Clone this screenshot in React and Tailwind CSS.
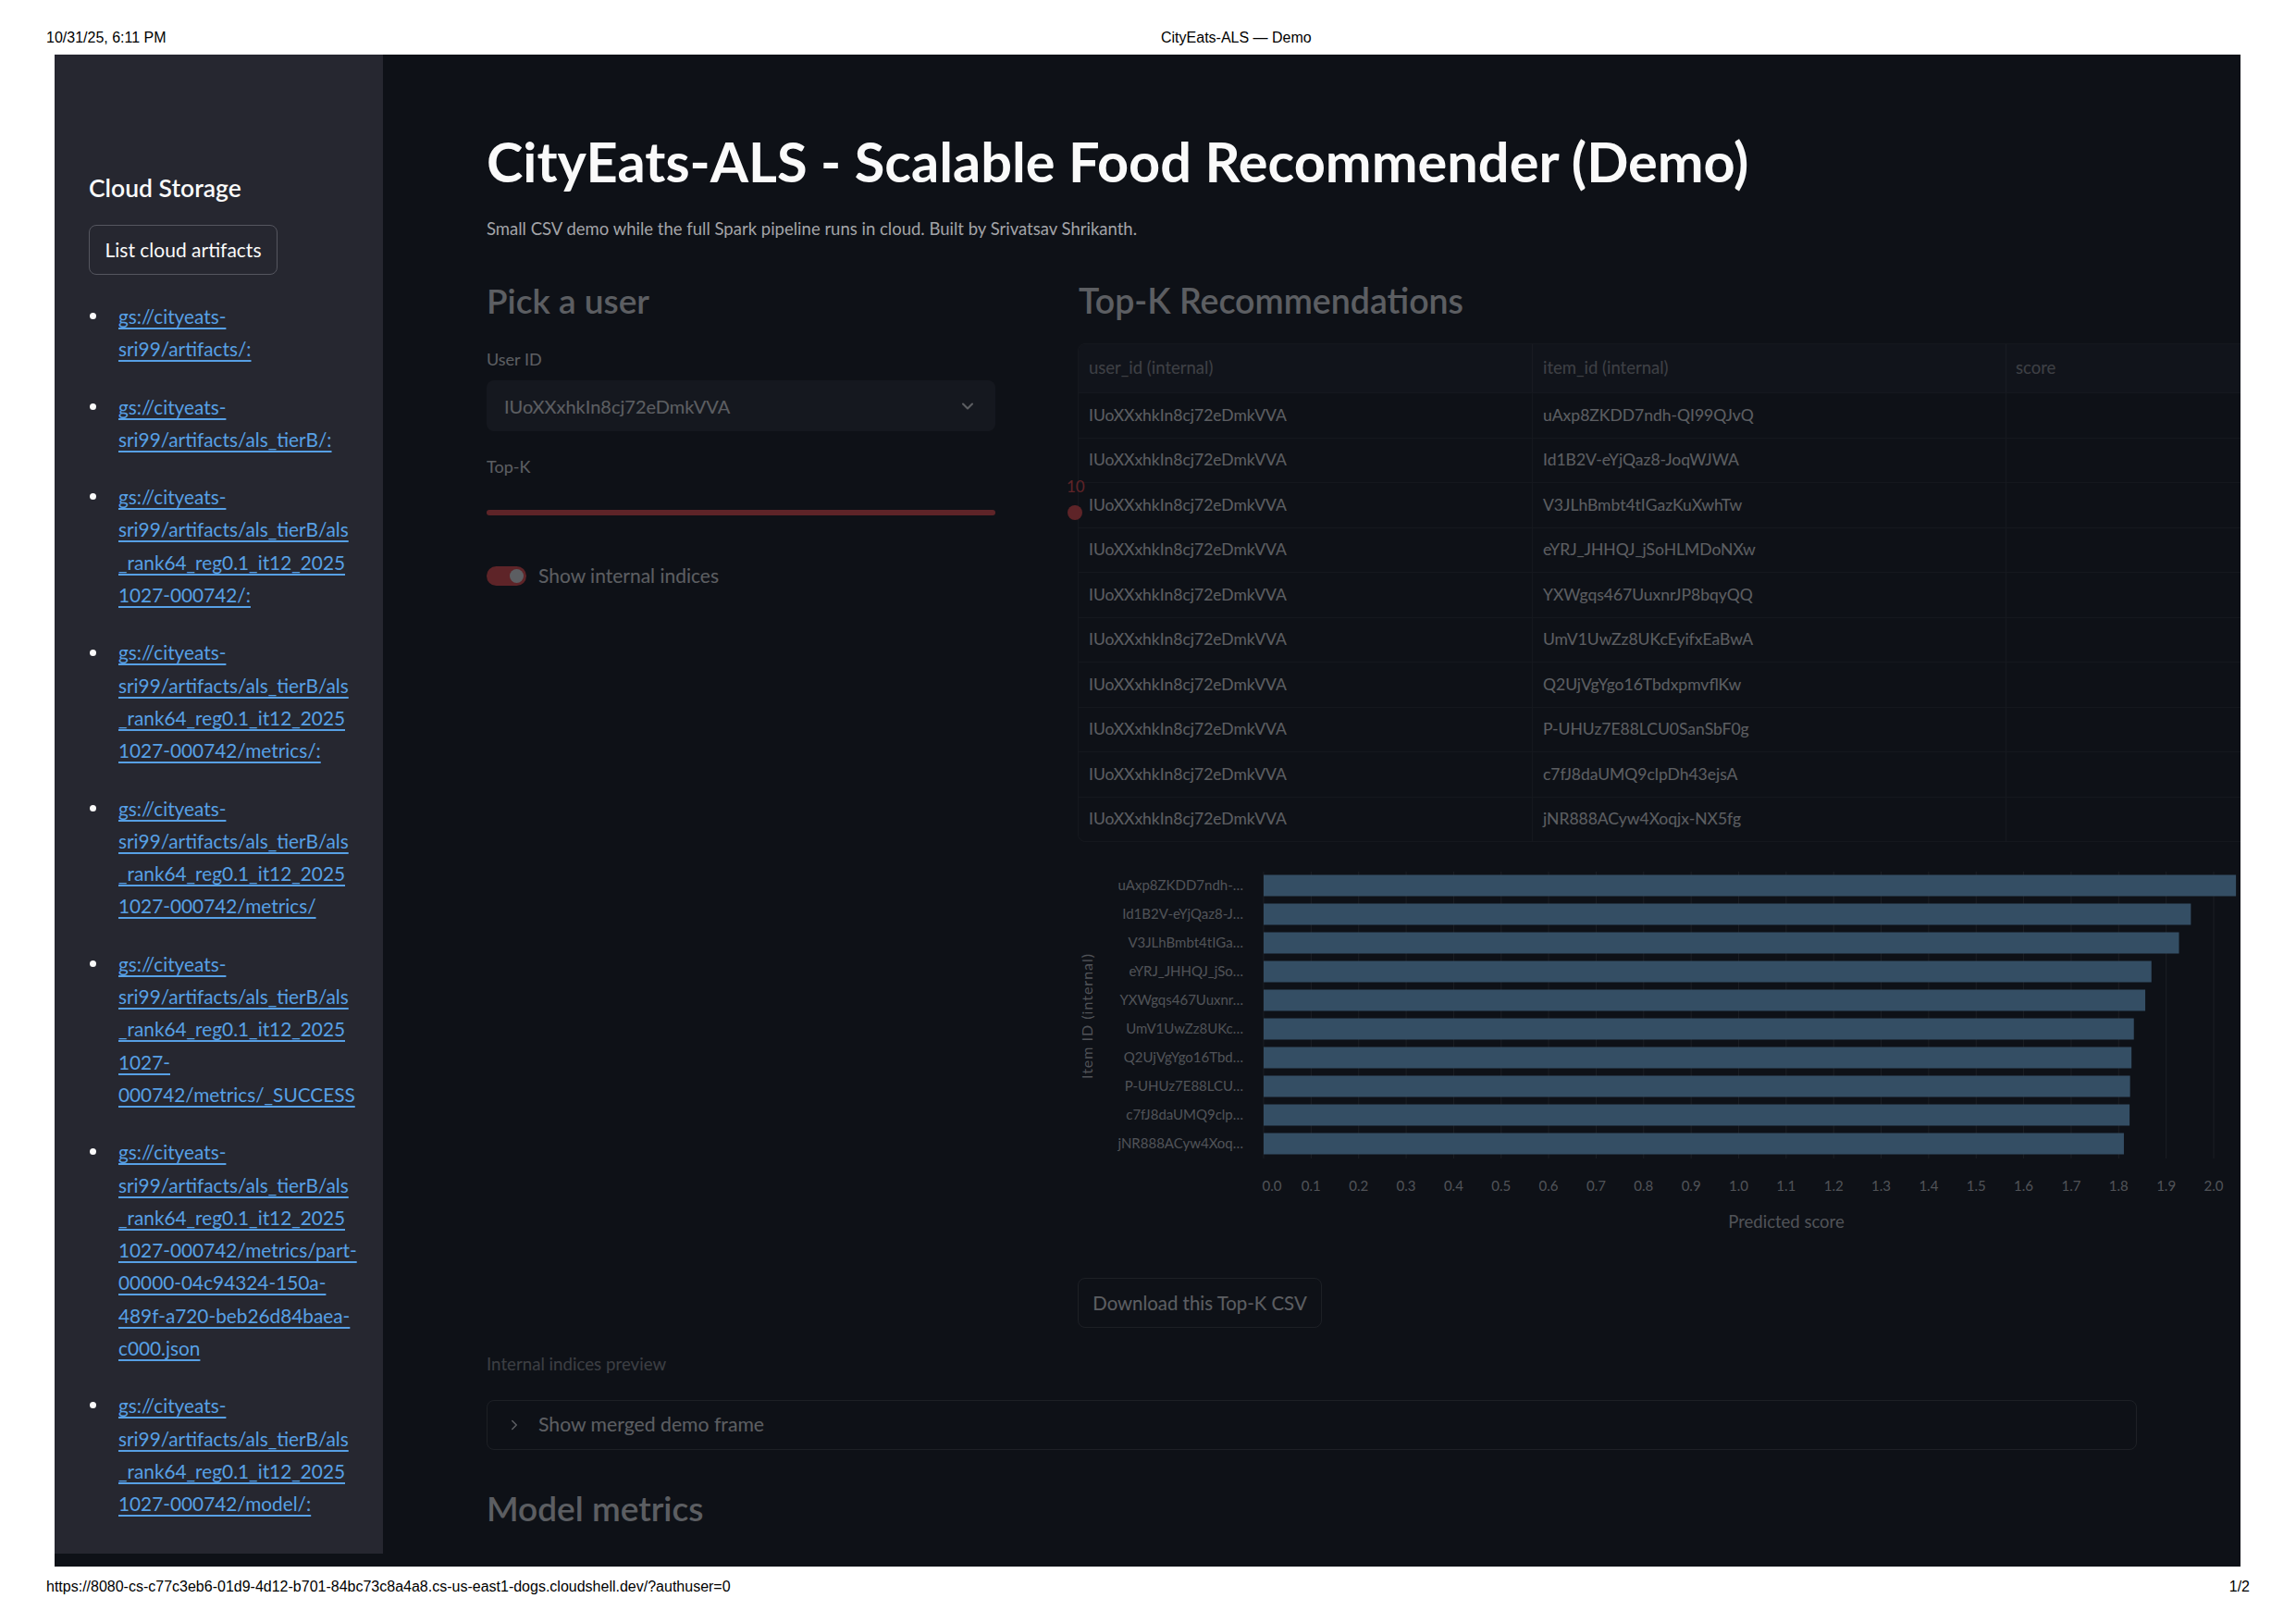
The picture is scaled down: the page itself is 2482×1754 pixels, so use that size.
import React from 'react';
import { ChevronDown, ChevronRight } from 'lucide-react';

const artifacts = [
    ['gs://cityeats-', 'sri99/artifacts/:'],
    ['gs://cityeats-', 'sri99/artifacts/als_tierB/:'],
    ['gs://cityeats-', 'sri99/artifacts/als_tierB/als', '_rank64_reg0.1_it12_2025', '1027-000742/:'],
    ['gs://cityeats-', 'sri99/artifacts/als_tierB/als', '_rank64_reg0.1_it12_2025', '1027-000742/metrics/:'],
    ['gs://cityeats-', 'sri99/artifacts/als_tierB/als', '_rank64_reg0.1_it12_2025', '1027-000742/metrics/'],
    ['gs://cityeats-', 'sri99/artifacts/als_tierB/als', '_rank64_reg0.1_it12_2025', '1027-', '000742/metrics/_SUCCESS'],
    ['gs://cityeats-', 'sri99/artifacts/als_tierB/als', '_rank64_reg0.1_it12_2025', '1027-000742/metrics/part-', '00000-04c94324-150a-', '489f-a720-beb26d84baea-', 'c000.json'],
    ['gs://cityeats-', 'sri99/artifacts/als_tierB/als', '_rank64_reg0.1_it12_2025', '1027-000742/model/:'],
];

const userId = 'IUoXXxhkIn8cj72eDmkVVA';

const recs = [
    { item: 'uAxp8ZKDD7ndh-QI99QJvQ', short: 'uAxp8ZKDD7ndh-…', score: 2.047 },
    { item: 'Id1B2V-eYjQaz8-JoqWJWA', short: 'Id1B2V-eYjQaz8-J…', score: 1.952 },
    { item: 'V3JLhBmbt4tIGazKuXwhTw', short: 'V3JLhBmbt4tIGa…', score: 1.927 },
    { item: 'eYRJ_JHHQJ_jSoHLMDoNXw', short: 'eYRJ_JHHQJ_jSo…', score: 1.869 },
    { item: 'YXWgqs467UuxnrJP8bqyQQ', short: 'YXWgqs467Uuxnr…', score: 1.856 },
    { item: 'UmV1UwZz8UKcEyifxEaBwA', short: 'UmV1UwZz8UKc…', score: 1.832 },
    { item: 'Q2UjVgYgo16TbdxpmvflKw', short: 'Q2UjVgYgo16Tbd…', score: 1.827 },
    { item: 'P-UHUz7E88LCU0SanSbF0g', short: 'P-UHUz7E88LCU…', score: 1.824 },
    { item: 'c7fJ8daUMQ9clpDh43ejsA', short: 'c7fJ8daUMQ9clp…', score: 1.823 },
    { item: 'jNR888ACyw4Xoqjx-NX5fg', short: 'jNR888ACyw4Xoq…', score: 1.811 },
];

const font = { fontFamily: 'Lato, sans-serif' };

function ScoreChart() {
    const x0 = 201;
    const unit = 513.5;
    const ticks = Array.from({ length: 21 }, (_, i) => i);
    return (
        <svg width="1290" height="430" className="block overflow-visible" style={font}>
            {ticks.map(i => (
                <line key={i} x1={x0 + i * 51.35} x2={x0 + i * 51.35} y1="25" y2="335" stroke="#fafafa" strokeOpacity="0.18" />
            ))}
            {recs.map((r, i) => (
                <g key={r.item}>
                    <rect x={x0} y={40 + i * 31 - 11.5} width={r.score * unit} height="23" fill="#83c9ff" />
                    <text x="179" y={40 + i * 31 + 5} textAnchor="end" fontSize="15" fill="#d5d6d9">{r.short}</text>
                </g>
            ))}
            {ticks.map(i => (
                <text key={i} x={x0 + i * 51.35 + (i === 0 ? 9 : 0)} y="370" textAnchor="middle" fontSize="15" fill="#d5d6d9">
                    {(i / 10).toFixed(1)}
                </text>
            ))}
            <text x="766" y="410" textAnchor="middle" fontSize="18.5" fill="#d5d6d9">Predicted score</text>
            <text transform="translate(16 181) rotate(-90)" textAnchor="middle" fontSize="16" letterSpacing="1" fill="#d5d6d9">Item ID (internal)</text>
        </svg>
    );
}

export default function App() {
    return (
        <div className="w-[2482px] h-[1754px] bg-white overflow-hidden" style={font}>
            <div className="h-[59px] pt-[30px] px-[50px] flex text-[16px] leading-[22px] text-black" style={{ fontFamily: '"Liberation Sans", Arial, sans-serif' }}>
                <span className="w-[1205px]">10/31/25, 6:11 PM</span>
                <span>CityEats-ALS — Demo</span>
            </div>

            <div className="ml-[59px] w-[2363px] h-[1634px] bg-[#0e1117] flex overflow-hidden">
                <aside className="w-[355px] h-[1620px] shrink-0 bg-[#262730] pl-[37px] pt-[126px]">
                    <h2 className="text-[26.5px] leading-[36px] font-semibold text-[#fafafa]">Cloud Storage</h2>
                    <button className="mt-[22px] w-[204px] h-[54px] rounded-lg border border-[#55565f] bg-[#262730] text-[21px] text-[#fafafa]">
                        List cloud artifacts
                    </button>
                    <ul className="mt-[27px]">
                        {artifacts.map((lines, i) => (
                            <li key={i} className="flex mb-[27px]">
                                <span className="w-[32px] h-[35.3px] shrink-0 flex items-center">
                                    <span className="ml-[1px] w-[7px] h-[7px] rounded-full bg-[#fafafa]" />
                                </span>
                                <a href="#" className="text-[20.8px] leading-[35.3px] text-[#57a0e5] underline underline-offset-[4px] whitespace-nowrap">
                                    {lines.map((l, j) => (
                                        <span key={j} className="block">{l}</span>
                                    ))}
                                </a>
                            </li>
                        ))}
                    </ul>
                </aside>

                <main className="flex-1 pl-[112px] pt-[81px] min-w-0">
                    <h1 className="text-[59.5px] leading-[68px] font-bold text-[#fafafa] whitespace-nowrap">
                        CityEats-ALS - Scalable Food Recommender (Demo)
                    </h1>
                    <p className="mt-[25px] text-[18.5px] leading-[28px] text-[#a3a4a8]">
                        Small CSV demo while the full Spark pipeline runs in cloud. Built by Srivatsav Shrikanth.
                    </p>

                    <div className="opacity-[0.33]">
                        <div className="mt-[41px] flex gap-[89px]">
                            <section className="w-[550px] shrink-0">
                                <h3 className="text-[37px] leading-[46px] font-semibold text-[#fafafa]">Pick a user</h3>
                                <div className="mt-[27px] text-[18px] leading-[26px] text-[#fafafa]">User ID</div>
                                <div className="mt-[10px] h-[55px] rounded-lg bg-[#262730] flex items-center justify-between pl-[19px] pr-[20px]">
                                    <span className="text-[20px] text-[#fafafa]">{userId}</span>
                                    <ChevronDown size={20} strokeWidth={2.5} color="#fafafa" />
                                </div>
                                <div className="mt-[25px] text-[18px] leading-[26px] text-[#fafafa]">Top-K</div>
                                <div className="relative mt-[34px] h-[6px] rounded-full bg-[#ff4b4b]">
                                    <span className="absolute left-[627px] top-[-36px] text-[17px] leading-[22px] text-[#ff4b4b]">10</span>
                                    <span className="absolute left-[628px] top-[-5px] w-[16px] h-[16px] rounded-full bg-[#ff4b4b]" />
                                </div>
                                <label className="mt-[52px] flex items-center gap-[13px]">
                                    <span className="w-[43px] h-[21px] rounded-full bg-[#ff4b4b] flex items-center justify-end pr-[3px]">
                                        <span className="w-[15px] h-[15px] rounded-full bg-[#fafafa]" />
                                    </span>
                                    <span className="text-[21px] leading-[26px] text-[#fafafa]">Show internal indices</span>
                                </label>
                            </section>

                            <section className="w-[1300px] shrink-0">
                                <h3 className="ml-[1px] text-[37.5px] leading-[46px] font-semibold text-[#fafafa] whitespace-nowrap">Top-K Recommendations</h3>
                                <div className="mt-[23px] w-[1300px] rounded-tl-lg rounded-bl-lg border border-[#fafafa]/10 overflow-hidden">
                                    <div className="h-[52px] flex bg-[#1a1c24] text-[18.5px] text-[#fafafa]/60">
                                        <div className="w-[490px] pl-[11px] flex items-center">user_id (internal)</div>
                                        <div className="w-[512px] pl-[11px] flex items-center border-l border-[#fafafa]/10">item_id (internal)</div>
                                        <div className="flex-1 pl-[10px] flex items-center border-l border-[#fafafa]/10">score</div>
                                    </div>
                                    {recs.map(r => (
                                        <div key={r.item} className="h-[48.5px] flex border-t border-[#fafafa]/10 text-[17.5px] text-[#fafafa]">
                                            <div className="w-[490px] pl-[11px] flex items-center">{userId}</div>
                                            <div className="w-[512px] pl-[11px] flex items-center border-l border-[#fafafa]/10">{r.item}</div>
                                            <div className="flex-1 border-l border-[#fafafa]/10" />
                                        </div>
                                    ))}
                                </div>
                                <div className="mt-[7px]">
                                    <ScoreChart />
                                </div>
                                <button className="mt-[34px] w-[264px] h-[54px] rounded-lg border border-[#fafafa]/20 text-[20.4px] text-[#fafafa]">
                                    Download this Top-K CSV
                                </button>
                            </section>
                        </div>

                        <div className="mt-[27px] text-[18.7px] leading-[24px] text-[#fafafa]/60">Internal indices preview</div>
                        <div className="mt-[27px] w-[1784px] h-[54px] rounded-lg border border-[#fafafa]/20 flex items-center pl-[20px] gap-[17px]">
                            <ChevronRight size={18} strokeWidth={2} color="#fafafa" />
                            <span className="text-[21.2px] text-[#fafafa]">Show merged demo frame</span>
                        </div>
                        <h3 className="mt-[40px] text-[37px] leading-[46px] font-semibold text-[#fafafa]">Model metrics</h3>
                    </div>
                </main>
            </div>

            <div className="pt-[11px] px-[50px] flex justify-between text-[16px] leading-[22px] text-black" style={{ fontFamily: '"Liberation Sans", Arial, sans-serif' }}>
                <span>https://8080-cs-c77c3eb6-01d9-4d12-b701-84bc73c8a4a8.cs-us-east1-dogs.cloudshell.dev/?authuser=0</span>
                <span>1/2</span>
            </div>
        </div>
    );
}
